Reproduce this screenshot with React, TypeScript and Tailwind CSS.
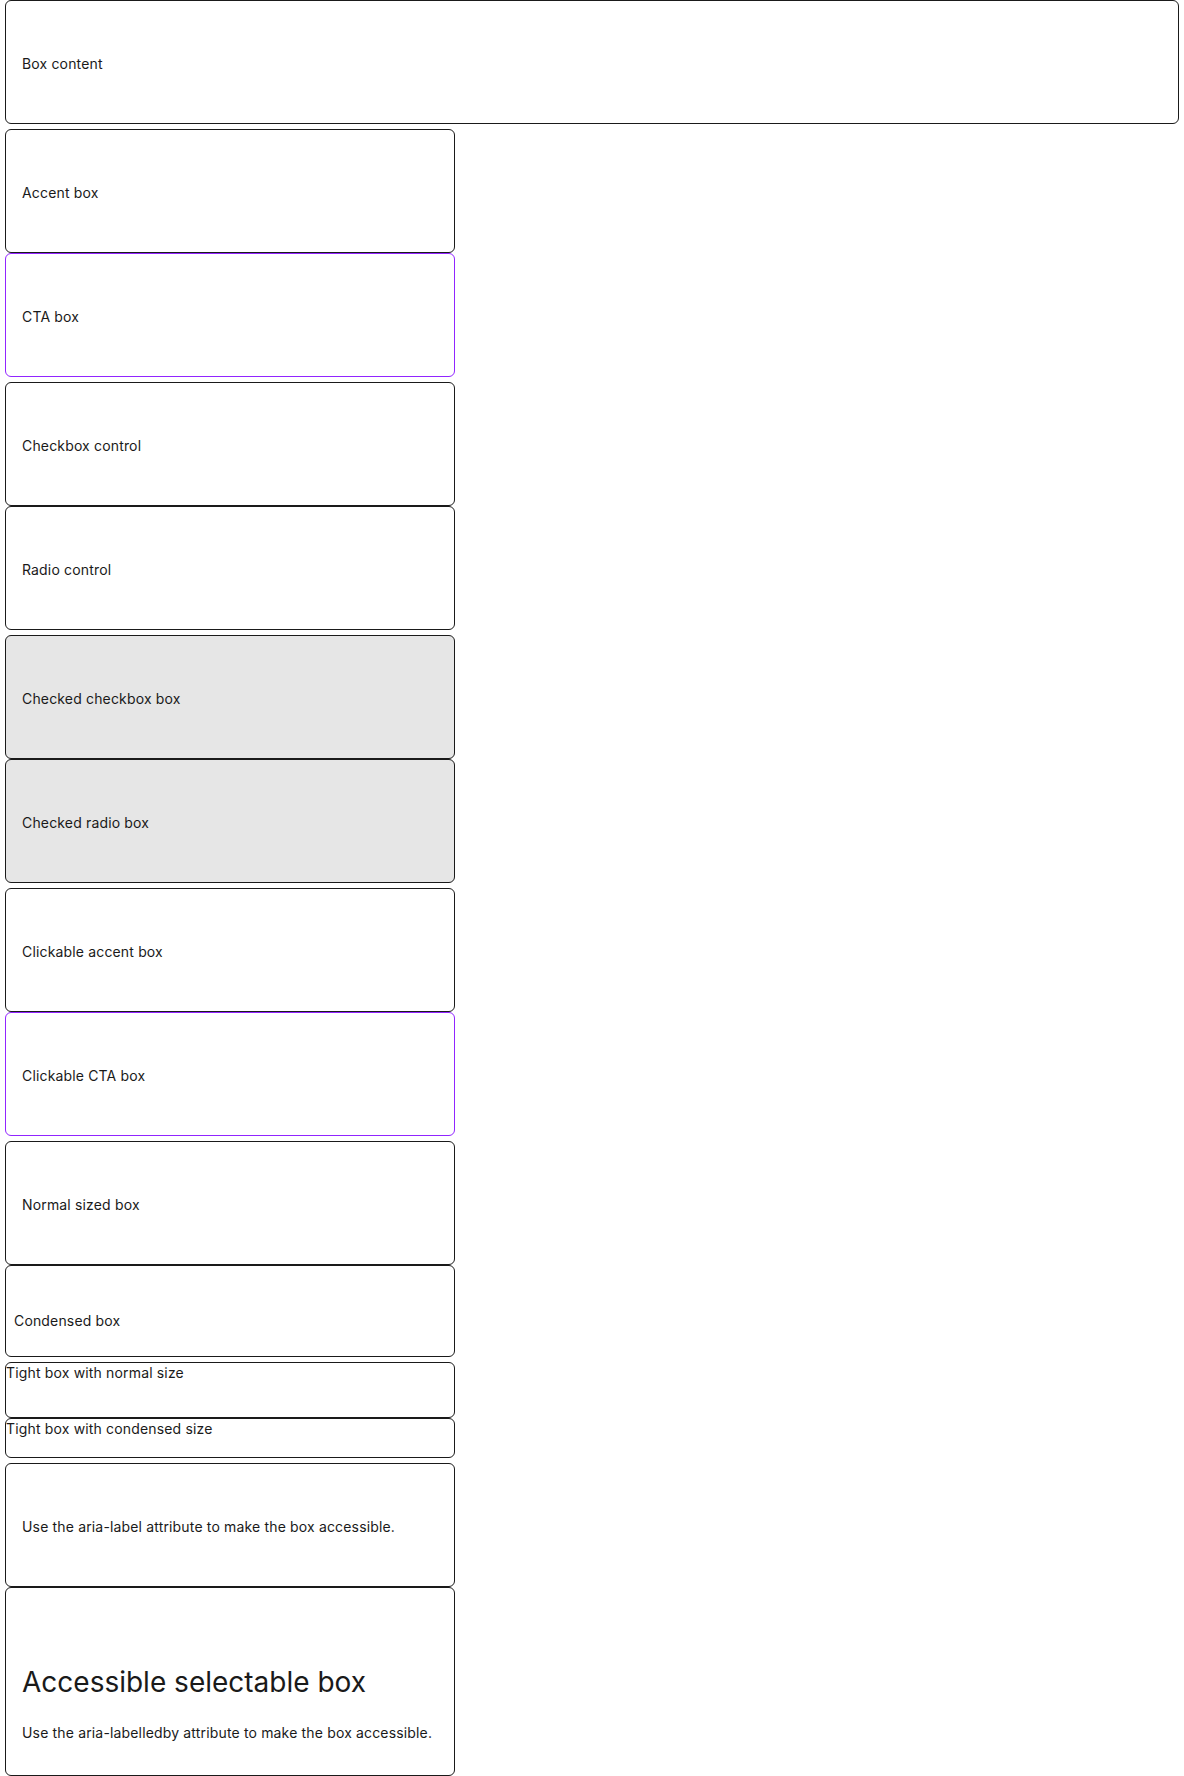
import React from 'react'

type Variant = 'default' | 'cta' | 'checked'

interface BoxProps {
  variant?: Variant
  className?: string
  children: React.ReactNode
}

function Box({ variant = 'default', className = '', children }: BoxProps) {
  const tone =
    variant === 'cta'
      ? 'border-[#9125ff] bg-white'
      : variant === 'checked'
        ? 'border-[#1a1a1a] bg-[#e6e6e6]'
        : 'border-[#1a1a1a] bg-white'
  return (
    <div className={`rounded-[6px] border text-[14px] leading-[20px] text-[#1a1a1a] ${tone} ${className}`}>
      {children}
    </div>
  )
}

const normal = 'h-[124px] flex items-center px-4 pt-[3px]'

export default function App() {
  return (
    <div className="px-[5px] font-['Inter',sans-serif] tracking-[0.01em]">
      <Box className={`${normal} mb-[5px]`}>Box content</Box>

      <div className="w-[450px]">
        <Box className={normal}>Accent box</Box>
        <Box variant="cta" className={`${normal} mb-[5px]`}>
          CTA box
        </Box>

        <Box className={normal}>Checkbox control</Box>
        <Box className={`${normal} mb-[5px]`}>Radio control</Box>

        <Box variant="checked" className={normal}>
          Checked checkbox box
        </Box>
        <Box variant="checked" className={`${normal} mb-[5px]`}>
          Checked radio box
        </Box>

        <Box className={normal}>Clickable accent box</Box>
        <Box variant="cta" className={`${normal} mb-[5px]`}>
          Clickable CTA box
        </Box>

        <Box className={normal}>Normal sized box</Box>
        <Box className="h-[92px] px-2 pt-[45px] mb-[5px]">Condensed box</Box>

        <Box className="h-[56px]">Tight box with normal size</Box>
        <Box className="h-[40px] mb-[5px]">Tight box with condensed size</Box>

        <Box className={normal}>Use the aria-label attribute to make the box accessible.</Box>
        <Box className="h-[189px] px-4 pt-[77px]">
          <h2 className="text-[28px] leading-[34px] tracking-normal">Accessible selectable box</h2>
          <p className="mt-[24px]">Use the aria-labelledby attribute to make the box accessible.</p>
        </Box>
      </div>
    </div>
  )
}
